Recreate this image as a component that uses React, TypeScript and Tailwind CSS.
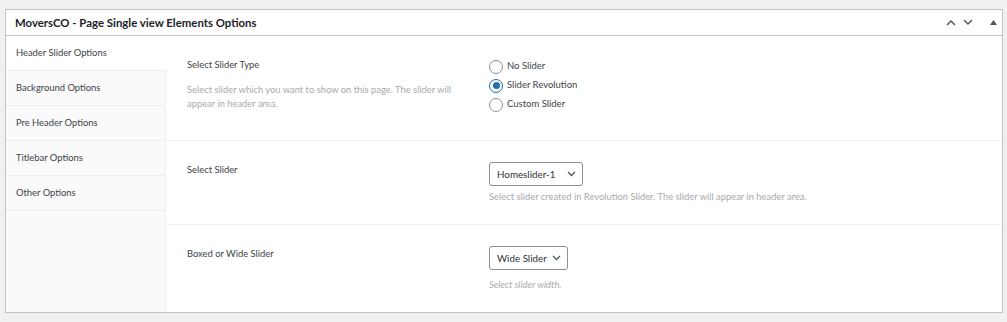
import React from 'react';

const tabs = [
  'Header Slider Options',
  'Background Options',
  'Pre Header Options',
  'Titlebar Options',
  'Other Options',
];

const sliderTypes = [
  { label: 'No Slider', checked: false },
  { label: 'Slider Revolution', checked: true },
  { label: 'Custom Slider', checked: false },
];

const Radio: React.FC<{ checked: boolean; label: string }> = ({ checked, label }) => (
  <div className="flex items-center gap-[4px] h-[19px]">
    <span
      className={
        checked
          ? 'w-[14px] h-[14px] rounded-full border border-[#2271b1] flex items-center justify-center bg-white'
          : 'w-[14px] h-[14px] rounded-full border border-[#8c8f94] bg-white'
      }
    >
      {checked && <span className="w-[7px] h-[7px] rounded-full bg-[#2271b1]" />}
    </span>
    <span className="text-[9.5px] text-[#3c434a]">{label}</span>
  </div>
);

const Select: React.FC<{ value: string; width: string }> = ({ value, width }) => (
  <div
    className={`${width} h-[24px] border border-[#8c8f94] rounded-[3px] bg-white flex items-center justify-between pl-[7px] pr-[6px]`}
  >
    <span className="text-[9.8px] text-[#2c3338]">{value}</span>
    <svg width="9" height="6" viewBox="0 0 9 6" fill="none">
      <path d="M1 1l3.5 3.5L8 1" stroke="#50575e" strokeWidth="1.3" />
    </svg>
  </div>
);

export default function App() {
  return (
    <div
      className="bg-[#f0f0f1] w-[1007px] h-[322px] pl-[5px] pr-[4px] pt-[9px]"
      style={{ fontFamily: 'Lato, "Open Sans", sans-serif' }}
    >
      <div className="border border-[#c3c4c7] bg-white">
        {/* Header */}
        <div className="h-[26px] border-b border-[#c3c4c7] flex items-center justify-between pl-[9px] pr-[5px]">
          <h2 className="text-[11.4px] font-bold text-[#1d2327]">
            MoversCO - Page Single view Elements Options
          </h2>
          <div className="flex items-center gap-[7px]">
            <svg width="10" height="7" viewBox="0 0 10 7" fill="none">
              <path d="M1 6l4-4 4 4" stroke="#50575e" strokeWidth="1.5" />
            </svg>
            <svg width="10" height="7" viewBox="0 0 10 7" fill="none">
              <path d="M1 1l4 4 4-4" stroke="#50575e" strokeWidth="1.5" />
            </svg>
            <svg width="7" height="5" viewBox="0 0 7 5" className="ml-[10px]">
              <path d="M0 5L3.5 0 7 5z" fill="#50575e" />
            </svg>
          </div>
        </div>

        {/* Body */}
        <div className="flex h-[276px]">
          <div className="w-[160px] bg-[#fafafa] border-r border-[#eeeeee]">
            {tabs.map((tab, i) => (
              <div
                key={tab}
                className={
                  i === 0
                    ? 'h-[35px] border-b border-[#eeeeee] bg-white flex items-center pl-[10px] pt-[1px] text-[9.4px] text-[#3c434a] -mr-px'
                    : 'h-[35px] border-b border-[#eeeeee] flex items-center pl-[10px] pt-[1px] text-[9.4px] text-[#3c434a]'
                }
              >
                {tab}
              </div>
            ))}
          </div>

          <div className="flex-1 flex flex-col">
            {/* Slider type */}
            <div className="h-[105px] border-b border-[#f0f0f0] flex pl-[21px] pt-[21px]">
              <div className="w-[302px] pt-[1px]">
                <div className="text-[9.4px] text-[#3c434a] leading-[14px]">Select Slider Type</div>
                <p className="mt-[11px] text-[9.4px] text-[#a7aaad] leading-[14px] w-[270px]">
                  Select slider which you want to show on this page. The slider will appear in header area.
                </p>
              </div>
              <div>
                {sliderTypes.map((t) => (
                  <Radio key={t.label} checked={t.checked} label={t.label} />
                ))}
              </div>
            </div>

            {/* Select slider */}
            <div className="h-[84px] border-b border-[#f0f0f0] flex pl-[21px] pt-[21px]">
              <div className="w-[302px] pt-[1px]">
                <div className="text-[9.4px] text-[#3c434a] leading-[14px]">Select Slider</div>
              </div>
              <div>
                <Select value="Homeslider-1" width="w-[94px]" />
                <p className="mt-[4px] text-[9.4px] text-[#a7aaad] leading-[14px]">
                  Select slider created in Revolution Slider. The slider will appear in header area.
                </p>
              </div>
            </div>

            {/* Boxed or wide */}
            <div className="flex-1 flex pl-[21px] pt-[21px]">
              <div className="w-[302px] pt-[1px]">
                <div className="text-[9.4px] text-[#3c434a] leading-[14px]">Boxed or Wide Slider</div>
              </div>
              <div>
                <Select value="Wide Slider" width="w-[79px]" />
                <p className="mt-[8px] text-[9.4px] italic text-[#a7aaad] leading-[14px]">
                  Select slider width.
                </p>
              </div>
            </div>
          </div>
        </div>
      </div>
    </div>
  );
}
